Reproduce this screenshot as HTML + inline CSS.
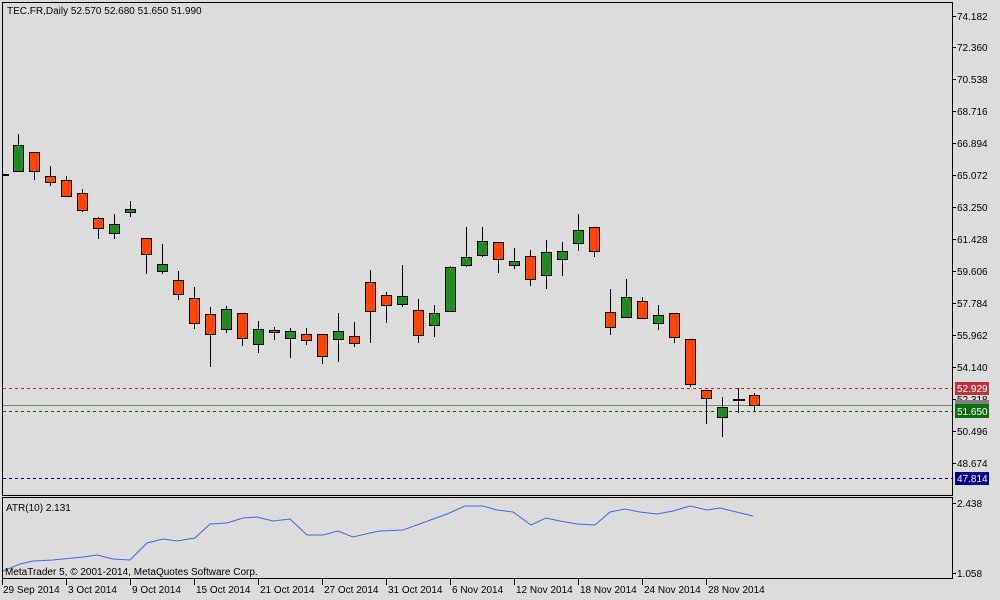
<!DOCTYPE html>
<html><head><meta charset="utf-8"><style>
html,body{margin:0;padding:0;background:#dcdcdc;}
svg{display:block;font-family:"Liberation Sans",sans-serif;}
</style></head><body>
<svg width="1000" height="600" viewBox="0 0 1000 600" xmlns="http://www.w3.org/2000/svg">
<rect width="1000" height="600" fill="#dcdcdc"/>
<g shape-rendering="crispEdges">
<rect x="2.5" y="2.5" width="950" height="493" fill="none" stroke="#000"/>
<rect x="2.5" y="497.5" width="950" height="81" fill="none" stroke="#000"/>
<rect x="2" y="174" width="7" height="2" fill="#000"/>
<!-- level lines -->
<line x1="3" y1="388.5" x2="952" y2="388.5" stroke="#d02020" stroke-dasharray="3,3"/>
<line x1="3" y1="405.5" x2="952" y2="405.5" stroke="#808080"/>
<line x1="3" y1="411.5" x2="952" y2="411.5" stroke="#006400" stroke-dasharray="3,3"/>
<line x1="3" y1="478.5" x2="952" y2="478.5" stroke="#0000a0" stroke-dasharray="3,3"/>
</g>
<g shape-rendering="crispEdges" stroke="#000" stroke-width="1">
<!-- wicks -->
<path d="M18.5 134V145M34.5 171V180M50.5 166V186M66.5 176V197M82.5 189V212M98.5 217V239M114.5 214V239M130.5 201V217M146.5 254V274M162.5 244V274M178.5 271V300M194.5 287V329M210.5 307V367M226.5 306V333M242.5 338V346M258.5 321V353M274.5 327V340M290.5 328V358M306.5 328V345M322.5 356V364M338.5 313V362M354.5 322V347M370.5 270V343M386.5 292V323M402.5 265V307M418.5 299V343M434.5 305V337M450.5 266V311M466.5 227V267M482.5 227V257M498.5 259V273M514.5 248V269M530.5 250V286M546.5 240V289M562.5 242V276M578.5 214V251M594.5 251V257M610.5 289V335M626.5 279V318M642.5 297V319M658.5 305V330M674.5 337V343M690.5 384V387M706.5 398V424M722.5 397V437M738.5 388V413M754.5 393V411"/>
</g>
<g shape-rendering="crispEdges" stroke="#000" stroke-width="1">
<g fill="#228b22">
<rect x="13.5" y="145.5" width="10" height="26"/>
<rect x="109.5" y="224.5" width="10" height="9"/>
<rect x="125.5" y="209.5" width="10" height="3"/>
<rect x="157.5" y="264.5" width="10" height="7"/>
<rect x="221.5" y="309.5" width="10" height="20"/>
<rect x="253.5" y="329.5" width="10" height="15"/>
<rect x="269.5" y="330.5" width="10" height="2"/>
<rect x="285.5" y="331.5" width="10" height="7"/>
<rect x="333.5" y="331.5" width="10" height="8"/>
<rect x="397.5" y="296.5" width="10" height="8"/>
<rect x="429.5" y="313.5" width="10" height="12"/>
<rect x="445.5" y="267.5" width="10" height="44"/>
<rect x="461.5" y="257.5" width="10" height="8"/>
<rect x="477.5" y="241.5" width="10" height="14"/>
<rect x="509.5" y="261.5" width="10" height="4"/>
<rect x="541.5" y="252.5" width="10" height="23"/>
<rect x="557.5" y="251.5" width="10" height="8"/>
<rect x="573.5" y="230.5" width="10" height="13"/>
<rect x="621.5" y="297.5" width="10" height="20"/>
<rect x="653.5" y="315.5" width="10" height="8"/>
<rect x="717.5" y="407.5" width="10" height="10"/>
</g>
<g fill="#ff4500">
<rect x="29.5" y="152.5" width="10" height="19"/>
<rect x="45.5" y="176.5" width="10" height="6"/>
<rect x="61.5" y="180.5" width="10" height="16"/>
<rect x="77.5" y="193.5" width="10" height="17"/>
<rect x="93.5" y="218.5" width="10" height="10"/>
<rect x="141.5" y="238.5" width="10" height="16"/>
<rect x="173.5" y="280.5" width="10" height="14"/>
<rect x="189.5" y="298.5" width="10" height="25"/>
<rect x="205.5" y="314.5" width="10" height="20"/>
<rect x="237.5" y="313.5" width="10" height="25"/>
<rect x="301.5" y="334.5" width="10" height="6"/>
<rect x="317.5" y="334.5" width="10" height="22"/>
<rect x="349.5" y="336.5" width="10" height="7"/>
<rect x="365.5" y="282.5" width="10" height="29"/>
<rect x="381.5" y="295.5" width="10" height="10"/>
<rect x="413.5" y="310.5" width="10" height="25"/>
<rect x="493.5" y="242.5" width="10" height="17"/>
<rect x="525.5" y="256.5" width="10" height="23"/>
<rect x="589.5" y="227.5" width="10" height="24"/>
<rect x="605.5" y="312.5" width="10" height="15"/>
<rect x="637.5" y="301.5" width="10" height="17"/>
<rect x="669.5" y="313.5" width="10" height="24"/>
<rect x="685.5" y="339.5" width="10" height="45"/>
<rect x="701.5" y="390.5" width="10" height="8"/>
<rect x="749.5" y="395.5" width="10" height="10"/>
</g>
</g>
<rect x="733" y="399" width="12" height="2" fill="#000"/>
<!-- ATR -->
<polyline fill="none" stroke="#4169e1" stroke-width="1" points="3,571 20,564 33,561 53,560 63,559 83,557 97,555 113,559 130,560 147,543 163,539 177,541 195,538 210,524 227,523 243,518 257,517 273,521 290,519 307,535 323,535 338,531 353,537 370,533 380,531 403,530 447,514 465,506 483,506 497,510 513,512 531,525 546,518 560,521 577,524 595,525 610,512 625,509 640,512 657,514 673,511 690,506 707,510 720,508 753,516"/>
<!-- axis ticks -->
<g shape-rendering="crispEdges" stroke="#000">
<path d="M952 16.5H956M952 47.5H956M952 79.5H956M952 111.5H956M952 143.5H956M952 175.5H956M952 207.5H956M952 239.5H956M952 271.5H956M952 303.5H956M952 335.5H956M952 367.5H956M952 399.5H956M952 431.5H956M952 463.5H956M952 503.5H956M952 573.5H956"/>
<path d="M2.5 579V585M66.5 579V585M130.5 579V585M194.5 579V585M258.5 579V585M322.5 579V585M386.5 579V585M450.5 579V585M514.5 579V585M578.5 579V585M642.5 579V585M706.5 579V585"/>
</g>
<g font-size="10" fill="#000">
<text x="957" y="20">74.182</text>
<text x="957" y="51">72.360</text>
<text x="957" y="83">70.538</text>
<text x="957" y="115">68.716</text>
<text x="957" y="147">66.894</text>
<text x="957" y="179">65.072</text>
<text x="957" y="211">63.250</text>
<text x="957" y="243">61.428</text>
<text x="957" y="275">59.606</text>
<text x="957" y="307">57.784</text>
<text x="957" y="339">55.962</text>
<text x="957" y="371">54.140</text>
<text x="957" y="403">52.318</text>
<text x="957" y="435">50.496</text>
<text x="957" y="467">48.674</text>
<text x="957" y="507">2.438</text>
<text x="957" y="577">1.058</text>
</g>
<g shape-rendering="crispEdges">
<rect x="955" y="382" width="34" height="13" fill="#c0303a"/>
<rect x="955" y="400" width="34" height="6" fill="#808080"/>
<rect x="955" y="404" width="34" height="14" fill="#0a6e0a"/>
<rect x="955" y="472" width="34" height="13" fill="#00008b"/>
</g>
<g font-size="10" fill="#fff">
<text x="957" y="392">52.929</text>
<text x="957" y="415">51.650</text>
<text x="957" y="482">47.814</text>
</g>
<g font-size="10" fill="#000">
<text x="7" y="14">TEC.FR,Daily  52.570 52.680 51.650 51.990</text>
<text x="6" y="511">ATR(10) 2.131</text>
<text x="5" y="575">MetaTrader 5, © 2001-2014, MetaQuotes Software Corp.</text>
<text x="3" y="593">29 Sep 2014</text>
<text x="68" y="593">3 Oct 2014</text>
<text x="132" y="593">9 Oct 2014</text>
<text x="196" y="593">15 Oct 2014</text>
<text x="260" y="593">21 Oct 2014</text>
<text x="324" y="593">27 Oct 2014</text>
<text x="388" y="593">31 Oct 2014</text>
<text x="452" y="593">6 Nov 2014</text>
<text x="516" y="593">12 Nov 2014</text>
<text x="580" y="593">18 Nov 2014</text>
<text x="644" y="593">24 Nov 2014</text>
<text x="708" y="593">28 Nov 2014</text>
</g>
</svg>
</body></html>
